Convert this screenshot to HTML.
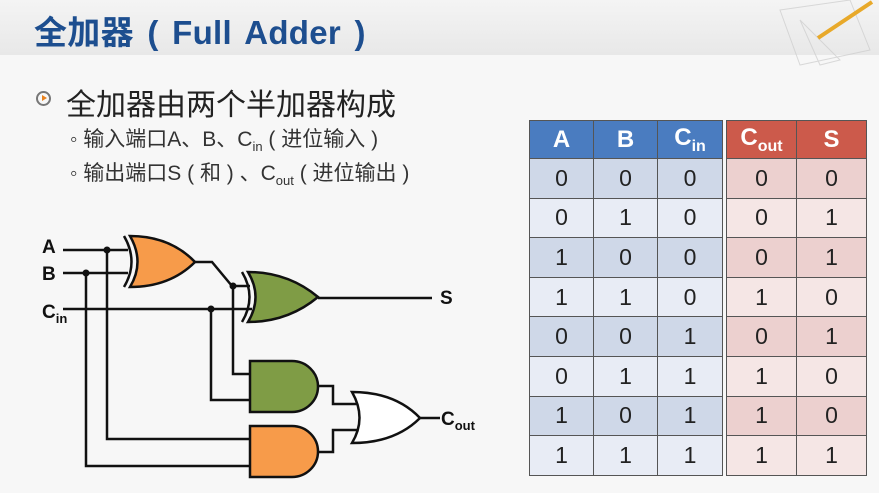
<!DOCTYPE html>
<html><head><meta charset="utf-8"><style>
body{margin:0;width:879px;height:493px;overflow:hidden;background:#f7f7f7;font-family:"Liberation Sans","Noto Sans CJK SC",sans-serif;position:relative}
.top{position:absolute;left:0;top:0;width:879px;height:55px;background:linear-gradient(#f4f4f4,#e8e8e8)}
.title{position:absolute;left:34px;top:6px;font-size:33px;font-weight:bold;color:#1d4e8f;letter-spacing:0.3px;word-spacing:4px;white-space:nowrap}
.b1{position:absolute;left:66px;top:80px;font-size:30px;color:#222;white-space:nowrap}
.ic{position:absolute;left:36px;top:91px;width:11px;height:11px;border:2px solid #777;border-radius:50%}
.ic:after{content:"";position:absolute;left:4px;top:2px;border-left:5px solid #e8821e;border-top:3.5px solid transparent;border-bottom:3.5px solid transparent}
.s{position:absolute;left:70px;font-size:21px;color:#333;white-space:nowrap}
.s sub{font-size:13px}
table{position:absolute;border-collapse:collapse;top:120px;table-layout:fixed}
td{border:1.5px solid #555;text-align:center;font-size:23px;color:#222;height:38.6px;padding:0}
th{border:1.5px solid #555;color:#fff;font-size:24px;height:37px;padding:0}
th sub{font-size:16px}
</style></head><body>
<div class="top"></div>
<svg style="position:absolute;left:760px;top:0" width="119" height="70"><g stroke="#ccc" fill="none" opacity=".7"><path d="M20,10 L90,0 L110,50 L40,65Z"/><path d="M40,20 L80,60 L60,65Z"/></g><line x1="58" y1="38" x2="112" y2="2" stroke="#e8a92a" stroke-width="4"/></svg>
<div class="title">全加器 ( Full Adder )</div>
<div class="ic"></div>
<div class="b1">全加器由两个半加器构成</div>
<div class="s" style="top:123px">◦ 输入端口A、B、C<sub>in</sub> ( 进位输入 )</div>
<div class="s" style="top:157px">◦ 输出端口S ( 和 ) 、C<sub>out</sub> ( 进位输出 )</div>
<svg style="position:absolute;left:0;top:0" width="879" height="493">
<g stroke="#111" stroke-width="2.5" fill="none">
<path d="M63,250H128M63,273H128M63,309H252"/>
<path d="M107,250V439H252M86,273V466H252"/>
<path d="M195,262H212L232,286H250M233,286V374H252M211,309V400H252"/>
<path d="M318,298H432M318,386H333V404H358M318,452H333V430H358M420,418H440"/>
<path d="M124,236Q139,262 124,287M242,272Q257,297 242,322"/>
</g>
<g stroke="#111" stroke-width="2.5">
<path d="M130,236Q170,236 195,262Q170,287 130,287Q145,262 130,236Z" fill="#f79b4a"/>
<path d="M248,272Q288,272 318,297Q288,322 248,322Q263,297 248,272Z" fill="#7f9c45"/>
<path d="M250,361H292A26,25.5 0 0 1 292,412H250Z" fill="#7f9c45"/>
<path d="M250,426H292A26,25.5 0 0 1 292,477H250Z" fill="#f79b4a"/>
<path d="M352,392Q395,392 420,418Q395,443 352,443Q367,418 352,392Z" fill="#fff"/>
</g>
<g fill="#111"><circle cx="107" cy="250" r="3.5"/><circle cx="86" cy="273" r="3.5"/><circle cx="211" cy="309" r="3.5"/><circle cx="233" cy="286" r="3.5"/></g>
<g font-family="Liberation Sans" font-weight="bold" font-size="19" fill="#111">
<text x="42" y="253">A</text><text x="42" y="280">B</text><text x="42" y="318">C<tspan font-size="13" dy="5">in</tspan></text>
<text x="440" y="304">S</text><text x="441" y="425">C<tspan font-size="13" dy="5">out</tspan></text>
</g>
</svg>
<table style="left:529px;width:193px">
<colgroup><col style="width:64px"><col style="width:64px"><col style="width:65px"></colgroup>
<tr style="background:#4a7cc0"><th>A</th><th>B</th><th>C<sub>in</sub></th></tr>
<tr style="background:#cfd8e8"><td>0</td><td>0</td><td>0</td></tr>
<tr style="background:#e8ecf5"><td>0</td><td>1</td><td>0</td></tr>
<tr style="background:#cfd8e8"><td>1</td><td>0</td><td>0</td></tr>
<tr style="background:#e8ecf5"><td>1</td><td>1</td><td>0</td></tr>
<tr style="background:#cfd8e8"><td>0</td><td>0</td><td>1</td></tr>
<tr style="background:#e8ecf5"><td>0</td><td>1</td><td>1</td></tr>
<tr style="background:#cfd8e8"><td>1</td><td>0</td><td>1</td></tr>
<tr style="background:#e8ecf5"><td>1</td><td>1</td><td>1</td></tr>
</table>
<table style="left:726px;width:140px">
<colgroup><col style="width:70px"><col style="width:70px"></colgroup>
<tr style="background:#cc5a4b"><th>C<sub>out</sub></th><th>S</th></tr>
<tr style="background:#ecd0cf"><td>0</td><td>0</td></tr>
<tr style="background:#f5e6e5"><td>0</td><td>1</td></tr>
<tr style="background:#ecd0cf"><td>0</td><td>1</td></tr>
<tr style="background:#f5e6e5"><td>1</td><td>0</td></tr>
<tr style="background:#ecd0cf"><td>0</td><td>1</td></tr>
<tr style="background:#f5e6e5"><td>1</td><td>0</td></tr>
<tr style="background:#ecd0cf"><td>1</td><td>0</td></tr>
<tr style="background:#f5e6e5"><td>1</td><td>1</td></tr>
</table>
</body></html>
